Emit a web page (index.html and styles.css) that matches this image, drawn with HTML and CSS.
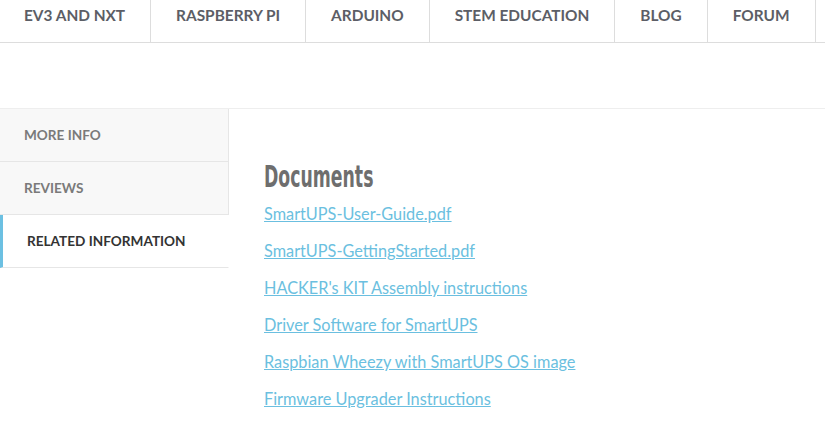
FILE: index.html
```html
<!DOCTYPE html>
<html lang="en">
<head>
  <meta charset="UTF-8" />
  <title>SmartUPS | Related Information</title>
  <link rel="stylesheet" href="styles.css">
</head>
<body>
  <nav class="topnav">
    <a href="#">EV3 AND NXT</a>
    <a href="#">RASPBERRY PI</a>
    <a href="#">ARDUINO</a>
    <a href="#">STEM EDUCATION</a>
    <a href="#">BLOG</a>
    <a href="#">FORUM</a>
  </nav>

  <div class="spacer"></div>

  <div class="tabs">
    <ul class="tab-list">
      <li><a href="#">MORE INFO</a></li>
      <li><a href="#">REVIEWS</a></li>
      <li class="active"><a href="#">RELATED INFORMATION</a></li>
    </ul>

    <div class="tab-content">
      <h2>Documents</h2>
      <ul class="docs">
        <li><a href="#">SmartUPS-User-Guide.pdf</a></li>
        <li><a href="#">SmartUPS-GettingStarted.pdf</a></li>
        <li><a href="#">HACKER's KIT Assembly instructions</a></li>
        <li><a href="#">Driver Software for SmartUPS</a></li>
        <li><a href="#">Raspbian Wheezy with SmartUPS OS image</a></li>
        <li><a href="#">Firmware Upgrader Instructions</a></li>
      </ul>
    </div>
  </div>
</body>
</html>
```

FILE: styles.css
```css
body {
  margin: 0;
  font-family: 'Lato', 'Open Sans', sans-serif;
  background: #fff;
  color: #555;
}
.topnav {
  display: flex;
  height: 42px;
  border-bottom: 1px solid #ddd;
}
.topnav a {
  display: flex;
  align-items: center;
  padding: 0 25px 12px;
  border-right: 1px solid #ddd;
  font-size: 15.4px;
  font-weight: bold;
  color: #5c5e66;
  text-decoration: none;
}
.topnav a:first-child {
  padding-left: 24px;
}
.spacer {
  height: 65px;
  border-bottom: 1px solid #eee;
}
.tabs {
  display: flex;
}
.tab-list {
  list-style: none;
  margin: 0;
  padding: 0;
  width: 229px;
  flex-shrink: 0;
}
.tab-list li {
  height: 52px;
  background: #f8f8f8;
  border-right: 1px solid #e6e6e6;
  border-bottom: 1px solid #e6e6e6;
  display: flex;
  align-items: center;
}
.tab-list a {
  padding-left: 24px;
  font-size: 13.6px;
  font-weight: bold;
  color: #7a7a7a;
  text-decoration: none;
}
.tab-list li.active {
  background: #fff;
  border-right-color: #fff;
  border-left: 3px solid #6cc0e2;
}
.tab-list li.active a {
  color: #333;
}
.tab-content {
  padding: 47px 0 0 35px;
}
.tab-content h2 {
  margin: 0 0 -1px;
  font-family: 'DejaVu Sans Condensed', sans-serif;
  font-size: 31px;
  font-weight: bold;
  line-height: 40px;
  color: #6e6e6e;
  transform: scaleX(0.62);
  transform-origin: left;
}
.docs {
  list-style: none;
  margin: 0;
  padding: 0;
}
.docs li {
  line-height: 37px;
}
.docs a {
  font-size: 16.3px;
  color: #6bbfe0;
}
```
